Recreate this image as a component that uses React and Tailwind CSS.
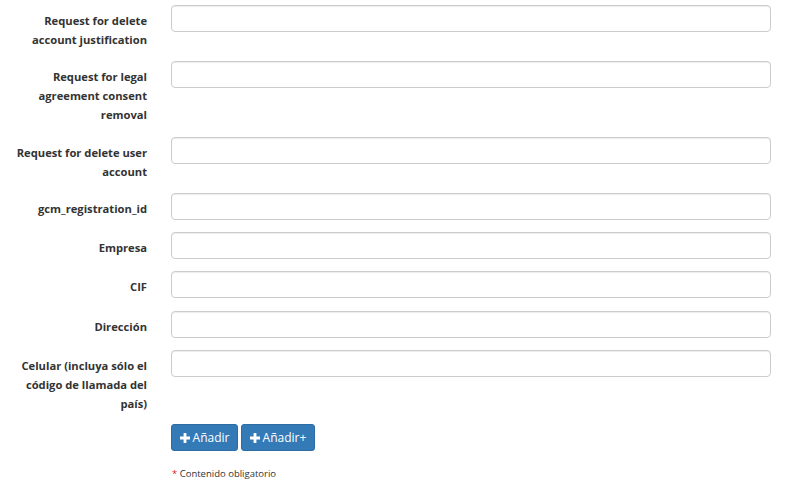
const fields = [
  { label: "Request for delete account justification" },
  { label: "Request for legal agreement consent removal", extra: true },
  { label: "Request for delete user account" },
  { label: "gcm_registration_id" },
  { label: "Empresa" },
  { label: "CIF", extra: true },
  { label: "Dirección" },
  { label: "Celular (incluya sólo el código de llamada del país)", last: true },
];

function PlusIcon() {
  return (
    <svg viewBox="0 0 10 10" className="h-[10px] w-[10px]" fill="currentColor">
      <path d="M3.6 0h2.8v3.6H10v2.8H6.4V10H3.6V6.4H0V3.6h3.6z" />
    </svg>
  );
}

export default function App() {
  return (
    <div className="min-h-screen bg-white pt-[5px] text-[#333] font-['Open_Sans',sans-serif]">
      {fields.map((f) => (
        <div key={f.label} className={`flex ${f.extra ? "mb-[13px]" : f.last ? "mb-[11px]" : "mb-3"}`}>
          <label className="w-[162px] shrink-0 pl-[13px] pr-[15px] pt-[6px] text-right text-[11.2px] font-bold leading-[19px]">
            {f.label}
          </label>
          <div className="pl-[9px]">
            <input
              type="text"
              className="block h-[27px] w-[600px] rounded-[4px] border border-[#ccc] bg-white shadow-[inset_0_1px_1px_rgba(0,0,0,0.075)] outline-none"
            />
          </div>
        </div>
      ))}
      <div className="flex gap-[3px] pl-[171px]">
        <button className="flex h-[27px] w-[67px] items-center justify-center gap-[3px] rounded-[3px] border border-[#2e6da4] bg-[#337ab7] text-[12px] text-white">
          <PlusIcon />
          Añadir
        </button>
        <button className="flex h-[27px] w-[74px] items-center justify-center gap-[3px] rounded-[3px] border border-[#2e6da4] bg-[#337ab7] text-[12px] text-white">
          <PlusIcon />
          Añadir+
        </button>
      </div>
      <div className="mt-[16px] pl-[172px] text-[9.5px] leading-[14px]">
        <span className="text-[#e02020]">*</span> Contenido obligatorio
      </div>
    </div>
  );
}
